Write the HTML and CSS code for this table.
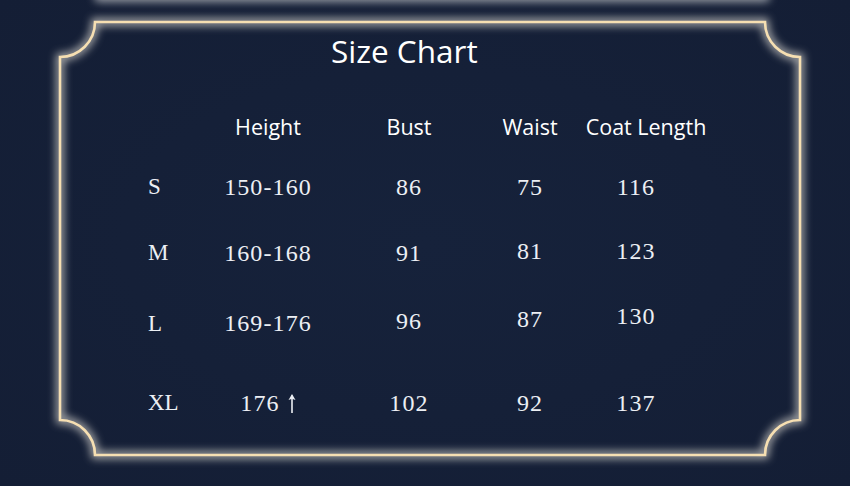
FILE: index.html
```html
<!DOCTYPE html>
<html>
<head>
<meta charset="utf-8">
<link rel="stylesheet" href="styles.css">
</head>
<body>
<div class="page">
  <svg class="frame" width="850" height="486" viewBox="0 0 850 486" aria-hidden="true">
    <defs>
      <filter id="glow" x="-10%" y="-10%" width="120%" height="120%">
        <feGaussianBlur stdDeviation="4"/>
      </filter>
      <filter id="glowTop" filterUnits="userSpaceOnUse" x="60" y="-40" width="740" height="80">
        <feGaussianBlur stdDeviation="4"/>
      </filter>
    </defs>
    <rect x="94" y="-10" width="676" height="12" rx="5" fill="#c4c7ca" filter="url(#glowTop)" opacity="0.75"/>
    <path d="M95,22 H765 A35,35 0 0 0 800,57 V420 A35,35 0 0 0 765,455 H95 A35,35 0 0 0 60,420 V57 A35,35 0 0 0 95,22 Z" fill="none" stroke="#eeeae0" stroke-width="7" filter="url(#glow)" opacity="0.75"/>
    <path d="M95,22 H765 A35,35 0 0 0 800,57 V420 A35,35 0 0 0 765,455 H95 A35,35 0 0 0 60,420 V57 A35,35 0 0 0 95,22 Z" fill="none" stroke="#f6dfb2" stroke-width="2.6"/>
  </svg>

  <div class="chart">
    <h1 class="title">Size Chart</h1>
    <div class="row head">
      <div class="cell label"></div>
      <div class="cell">Height</div>
      <div class="cell">Bust</div>
      <div class="cell">Waist</div>
      <div class="cell">Coat Length</div>
    </div>
    <div class="row data r-s">
      <div class="cell label">S</div>
      <div class="cell">150-160</div>
      <div class="cell">86</div>
      <div class="cell">75</div>
      <div class="cell last">116</div>
    </div>
    <div class="row data r-m">
      <div class="cell label">M</div>
      <div class="cell">160-168</div>
      <div class="cell">91</div>
      <div class="cell lift2">81</div>
      <div class="cell last lift2">123</div>
    </div>
    <div class="row data r-l">
      <div class="cell label">L</div>
      <div class="cell">169-176</div>
      <div class="cell lift2">96</div>
      <div class="cell lift4">87</div>
      <div class="cell last lift7">130</div>
    </div>
    <div class="row data r-xl">
      <div class="cell label">XL</div>
      <div class="cell">176<svg class="arrow" width="8" height="19" viewBox="0 0 8 19" aria-hidden="true"><path d="M4,1.5 V19" stroke="#eceff4" stroke-width="1.6"/><path d="M4,0 L7.5,6 L4,4.8 L0.5,6 Z" fill="#eceff4"/></svg></div>
      <div class="cell">102</div>
      <div class="cell">92</div>
      <div class="cell last">137</div>
    </div>
  </div>
</div>
</body>
</html>
```

FILE: styles.css
```css
html, body {
  margin: 0;
  padding: 0;
}

body {
  width: 850px;
  height: 486px;
  overflow: hidden;
  background: #15203a;
}

.page {
  position: relative;
  width: 850px;
  height: 486px;
  background: radial-gradient(ellipse at 50% 50%, #16223b 0%, #141e35 100%);
}

.frame {
  position: absolute;
  left: 0;
  top: 0;
}

.chart {
  position: relative;
  padding-top: 31px;
}

.title {
  margin: 0 0 0 331px;
  height: 40px;
  line-height: 40px;
  font-family: "Open Sans", "Noto Sans", sans-serif;
  font-weight: 400;
  font-size: 31.5px;
  color: #ffffff;
}

.row {
  display: grid;
  grid-template-columns: 60px 120px 162px 80px 152px;
  margin-left: 148px;
  height: 40px;
  align-items: center;
}

.cell {
  text-align: center;
  white-space: nowrap;
}

.cell.label {
  text-align: left;
}

.head {
  margin-top: 35px;
  font-family: "Open Sans", "Noto Sans", sans-serif;
  font-size: 21.5px;
  color: #ffffff;
}

.data {
  font-family: "Liberation Serif", "Times New Roman", serif;
  font-size: 24px;
  letter-spacing: 1.1px;
  color: #eceff4;
}

.data .label {
  letter-spacing: 0;
  font-size: 23px;
}

.data .last {
  padding-right: 20px;
}

.r-s { margin-top: 21px; }
.r-m { margin-top: 26px; }
.r-l { margin-top: 30px; }
.r-xl { margin-top: 40px; }

.lift2 { padding-bottom: 4px; }
.lift4 { padding-bottom: 8px; }
.lift7 { padding-bottom: 14px; }

.arrow {
  margin-left: 8px;
  vertical-align: -2px;
}
```
